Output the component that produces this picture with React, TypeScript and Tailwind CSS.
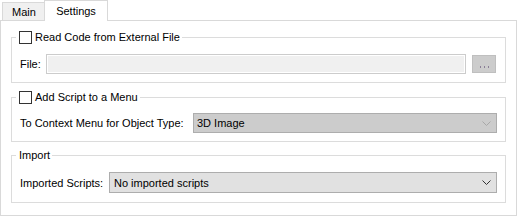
import React from "react";

function Chevron({ color }: { color: string }) {
  return (
    <svg width="9" height="5" viewBox="0 0 9 5" className="shrink-0">
      <polyline points="0.5,0.5 4.5,4.5 8.5,0.5" fill="none" stroke={color} strokeWidth="1" />
    </svg>
  );
}

function CheckLegend({ label }: { label: string }) {
  return (
    <legend className="ml-[4px] pl-[3px] pr-[2px] flex items-center gap-[3px] h-[14px]">
      <span className="block w-[13px] h-[13px] border border-[#333333] bg-white" />
      <span>{label}</span>
    </legend>
  );
}

export default function App() {
  return (
    <div className="w-[517px] h-[217px] bg-white text-[11px] leading-[14px] text-black font-['Liberation_Sans',Arial,sans-serif]">
      <div className="flex items-end h-[20px] pl-[2px]">
        <div className="h-[18px] w-[42px] border border-r-0 border-b-0 border-[#d9d9d9] bg-[#f0f0f0] flex items-center justify-center pl-[1px]">
          Main
        </div>
        <div className="relative z-10 -mb-px h-[21px] w-[64px] border border-b-0 border-[#d9d9d9] bg-white flex items-center justify-center pb-[1px]">
          Settings
        </div>
      </div>
      <div className="h-[196px] border border-[#d9d9d9] px-[10px]">
        <fieldset className="mt-[9px] border border-[#dcdcdc] p-0 m-0">
          <CheckLegend label="Read Code from External File" />
          <div className="flex items-center h-[20px] mt-[10px] mb-[8px] pl-[8px] pr-[9px]">
            <span className="w-[26px] shrink-0">File:</span>
            <div className="flex-1 h-[20px] border border-[#cccccc] bg-[#f0f0f0] shadow-[inset_0_0_0_1px_#ffffff]" />
            <div className="ml-[6px] w-[24px] h-[18px] border border-[#bfbfbf] bg-[#cccccc] flex items-end justify-center gap-[3px] pb-[4px]">
              <span className="block w-[1px] h-[2px] bg-[#8a7e96]" />
              <span className="block w-[1px] h-[2px] bg-[#8a7e96]" />
              <span className="block w-[1px] h-[2px] bg-[#8a7e96]" />
            </div>
          </div>
        </fieldset>
        <fieldset className="mt-[7px] border border-[#dcdcdc] p-0 m-0">
          <CheckLegend label="Add Script to a Menu" />
          <div className="flex items-center h-[20px] mt-[9px] mb-[8px] pl-[8px] pr-[8px]">
            <span className="w-[173px] shrink-0">To Context Menu for Object Type:</span>
            <div className="flex-1 h-[20px] border border-[#adadad] bg-[#cccccc] flex items-center justify-between pl-[3px] pr-[5px]">
              <span>3D Image</span>
              <Chevron color="#a8a8a8" />
            </div>
          </div>
        </fieldset>
        <fieldset className="mt-[6px] border border-[#dcdcdc] p-0 m-0">
          <legend className="ml-[4px] pl-[3px] pr-[2px] h-[14px]">Import</legend>
          <div className="flex items-center h-[21px] mt-[10px] mb-[9px] pl-[8px] pr-[8px]">
            <span className="w-[89px] shrink-0">Imported Scripts:</span>
            <div className="flex-1 h-[21px] border border-[#adadad] bg-[#e1e1e1] flex items-center justify-between pl-[4px] pr-[5px]">
              <span>No imported scripts</span>
              <Chevron color="#333333" />
            </div>
          </div>
        </fieldset>
      </div>
    </div>
  );
}
